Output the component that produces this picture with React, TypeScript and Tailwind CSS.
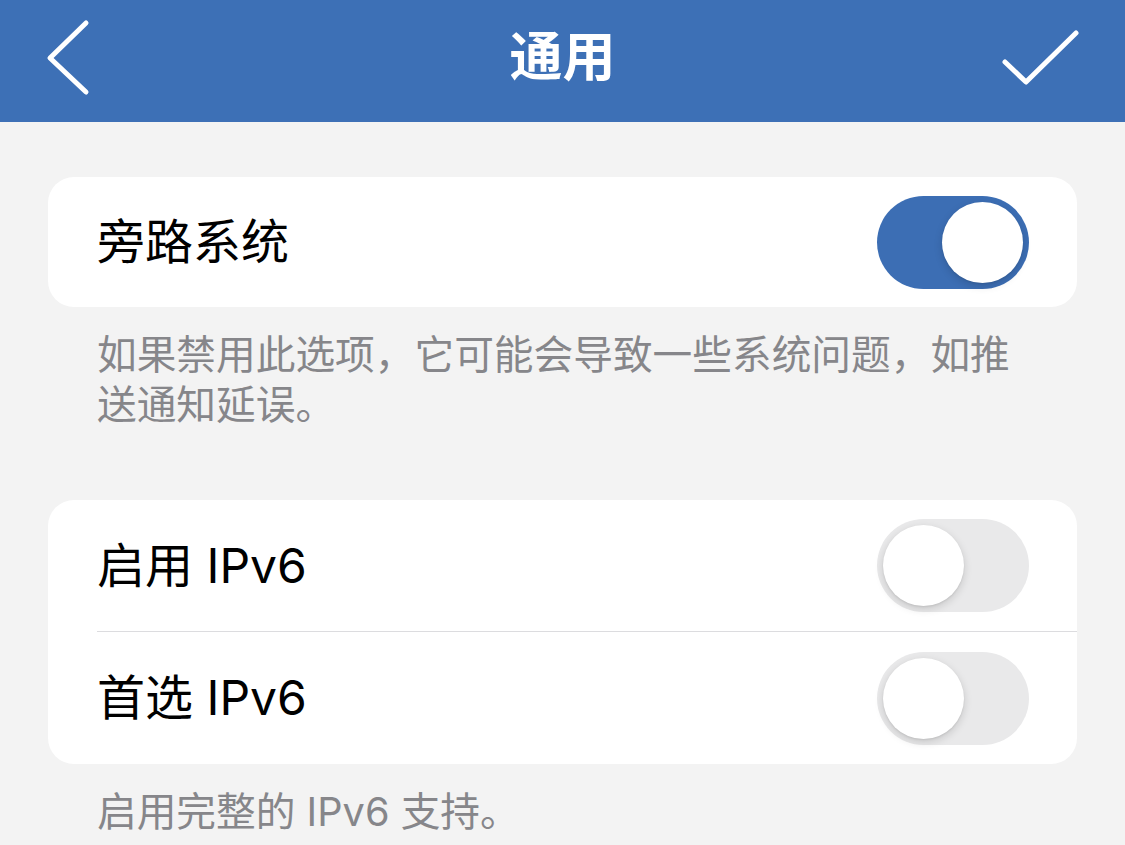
import { useState } from 'react'

const FONT = { fontFamily: '"Inter", "Noto Sans CJK SC", sans-serif' }

function Toggle({ on, onChange }: { on: boolean; onChange: () => void }) {
  return (
    <button
      type="button"
      onClick={onChange}
      className={`relative h-[93px] w-[152px] shrink-0 rounded-full transition-colors ${
        on ? 'bg-[#3c6eb4]' : 'bg-[#e9e9ea]'
      }`}
    >
      <span
        className={`absolute top-[6px] h-[81px] w-[81px] rounded-full bg-white shadow-[0_3px_8px_rgba(0,0,0,0.15),0_1px_2px_rgba(0,0,0,0.08)] transition-all ${
          on ? 'left-[65px]' : 'left-[6px]'
        }`}
      />
    </button>
  )
}

function Row({
  label,
  on,
  onChange,
  h,
}: {
  label: string
  on: boolean
  onChange: () => void
  h: string
}) {
  return (
    <div className={`flex items-center justify-between pl-[49px] pr-[48px] ${h}`}>
      <span className="text-[48px] leading-none text-black">{label}</span>
      <Toggle on={on} onChange={onChange} />
    </div>
  )
}

export default function App() {
  const [bypass, setBypass] = useState(true)
  const [ipv6, setIpv6] = useState(false)
  const [preferV6, setPreferV6] = useState(false)

  return (
    <div className="min-h-[845px] w-[1125px] overflow-hidden bg-[#f3f3f3]" style={FONT}>
      {/* Header */}
      <header className="flex h-[122px] items-center justify-between bg-[#3d70b6] px-[44px] pb-[8px] text-white">
        <button type="button" className="w-[90px]">
          <svg width="50" height="84" viewBox="0 0 50 84" fill="none">
            <path d="M42 8 L6 43 L42 77" stroke="white" strokeWidth="5" strokeLinecap="round" strokeLinejoin="round" />
          </svg>
        </button>
        <h1 className="text-[53px] font-semibold leading-none">通用</h1>
        <button type="button" className="flex w-[90px] justify-end">
          <svg width="84" height="64" viewBox="0 0 84 64" fill="none">
            <path d="M8 37 L29 57 L79 8" stroke="white" strokeWidth="5" strokeLinecap="round" strokeLinejoin="round" />
          </svg>
        </button>
      </header>

      <main className="px-[48px] pt-[55px]">
        <section className="overflow-hidden rounded-[26px] bg-white">
          <Row label="旁路系统" on={bypass} onChange={() => setBypass(!bypass)} h="h-[130px]" />
        </section>
        <p className="pl-[49px] pr-[48px] pt-[23px] text-[39.7px] leading-[50px] text-[#86868a]">
          如果禁用此选项，它可能会导致一些系统问题，如推送通知延误。
        </p>

        <section className="mt-[70px] overflow-hidden rounded-[26px] bg-white">
          <Row label="启用 IPv6" on={ipv6} onChange={() => setIpv6(!ipv6)} h="h-[131px]" />
          <div className="ml-[49px] h-px bg-[#dcdcdf]" />
          <Row label="首选 IPv6" on={preferV6} onChange={() => setPreferV6(!preferV6)} h="h-[132px]" />
        </section>
        <p className="pl-[49px] pt-[23px] text-[39.7px] leading-[50px] text-[#86868a]">
          启用完整的 IPv6 支持。
        </p>
      </main>
    </div>
  )
}
